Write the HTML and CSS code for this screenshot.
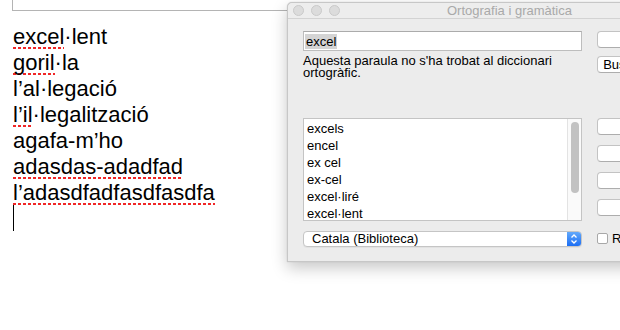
FILE: index.html
```
<!DOCTYPE html>
<html lang="ca">

<head>
    <meta charset="UTF-8" />
    <title>Ortografia i gramàtica</title>
    <link rel="stylesheet" href="styles.css">
</head>

<body>
    <div class="doc">
        <div class="doc-frame"></div>
        <div class="doc-text">
            <p><span class="typo">excel</span>·lent</p>
            <p><span class="typo">goril</span>·la</p>
            <p>l’al·legació</p>
            <p><span class="typo">l’il</span>·legalització</p>
            <p>agafa-m’ho</p>
            <p><span class="typo">adasdas-adadfad</span></p>
            <p><span class="typo">l’adasdfadfasdfasdfa</span></p>
            <span class="caret"></span>
        </div>
    </div>

    <div class="panel">
        <div class="titlebar">
            <div class="lights"><span></span><span></span><span></span></div>
            <div class="title">Ortografia i gramàtica</div>
        </div>
        <div class="panel-body">
            <div class="main-col">
                <div class="word-field"><span class="selected">excel</span></div>
                <p class="message">Aquesta paraula no s'ha trobat al diccionari ortogràfic.</p>
                <div class="guesses">
                    <ul>
                        <li>excels</li>
                        <li>encel</li>
                        <li>ex cel</li>
                        <li>ex-cel</li>
                        <li>excel·liré</li>
                        <li>excel·lent</li>
                    </ul>
                    <div class="scrollbar"><div class="thumb"></div></div>
                </div>
                <div class="popup">
                    <span class="popup-label">Catala (Biblioteca)</span>
                    <span class="stepper">
                        <svg width="8" height="12" viewBox="0 0 8 12">
                            <path d="M1.5 4.5 L4 2 L6.5 4.5 M1.5 7.5 L4 10 L6.5 7.5" fill="none" stroke="#fff" stroke-width="1.3" />
                        </svg>
                    </span>
                </div>
            </div>
            <div class="side-col">
                <button>Canvia</button>
                <button class="find">Busca la següent</button>
                <div class="button-group">
                    <button>Ignora</button>
                    <button>Aprèn</button>
                    <button>Defineix</button>
                    <button>Endevina</button>
                </div>
                <label class="check"><span class="box"></span>Revisa la gramàtica</label>
            </div>
        </div>
    </div>
</body>

</html>
```

FILE: styles.css
```
:root {
    --panel-bg: #ececec;
    --panel-border: #c7c7c7;
    --control-border: #c3c3c3;
    --typo-red: #f02626;
}

body {
    font-family: 'Liberation Sans', Arial, sans-serif;
    background: #fff;
    color: #000;
    margin: 0;
    height: 330px;
    overflow: hidden;
}

/* document behind the panel */
.doc-frame {
    margin-left: 12px;
    height: 10px;
    border-left: 1px solid #b4b4b4;
    border-bottom: 1px solid #b4b4b4;
}

.doc-text {
    padding: 13px 0 0 13px;
    font-size: 22px;
    line-height: 26px;
}

.doc-text p {
    margin: 0;
}

.typo {
    background-image: repeating-linear-gradient(90deg, var(--typo-red) 0 3px, transparent 3px 5px);
    background-size: 100% 2px;
    background-repeat: no-repeat;
    background-position: 0 100%;
}

.caret {
    display: block;
    width: 1px;
    height: 26px;
    margin-top: -1px;
    background: #000;
}

/* spelling window */
.panel {
    position: absolute;
    left: 287px;
    top: 2px;
    width: 445px;
    height: 260px;
    box-sizing: border-box;
    background: var(--panel-bg);
    border: 1px solid var(--panel-border);
    border-radius: 5px 5px 0 0;
    box-shadow: 0 6px 16px rgba(0, 0, 0, 0.22), 0 0 1px rgba(0, 0, 0, 0.25);
}

.titlebar {
    height: 15px;
    display: grid;
    grid-template-columns: 1fr auto 1fr;
    align-items: center;
    border-bottom: 1px solid #d3d3d3;
    background: #ededed;
    border-radius: 5px 5px 0 0;
}

.lights {
    display: flex;
    gap: 7px;
    padding-left: 5px;
}

.lights span {
    width: 11px;
    height: 11px;
    box-sizing: border-box;
    border-radius: 50%;
    background: #dcdcdc;
    border: 1px solid #cacaca;
}

.title {
    font-size: 13px;
    line-height: 15px;
    color: #a9a9a9;
}

.panel-body {
    display: flex;
    gap: 15px;
    padding: 12px 0 0 15px;
}

.main-col {
    width: 279px;
    display: flex;
    flex-direction: column;
}

.word-field {
    height: 20px;
    box-sizing: border-box;
    background: #fff;
    border: 1px solid #bdbdbd;
    border-top-color: #ababab;
    padding: 2px 0 0 1px;
    font-size: 13px;
    line-height: 15px;
}

.selected {
    display: inline-block;
    background: #d4d4d4;
    padding: 0 1px;
}

.message {
    margin: 4px 0 0;
    font-size: 13px;
    line-height: 12px;
}

.guesses {
    margin-top: 39px;
    height: 103px;
    box-sizing: border-box;
    display: flex;
    background: #fff;
    border: 1px solid #c4c4c4;
    overflow: hidden;
}

.guesses ul {
    flex: 1;
    margin: 0;
    padding: 1px 0 0 3px;
    list-style: none;
    font-size: 13px;
    line-height: 17px;
}

.scrollbar {
    width: 14px;
    box-sizing: border-box;
    border-left: 1px solid #e3e3e3;
    background: #fafafa;
}

.thumb {
    width: 8px;
    height: 71px;
    margin: 3px auto 0;
    border-radius: 4px;
    background: #c2c2c2;
}

.popup {
    margin-top: 10px;
    height: 16px;
    box-sizing: border-box;
    display: flex;
    align-items: center;
    background: #fff;
    border: 1px solid #c5c5c5;
    border-radius: 4px;
    overflow: hidden;
    font-size: 13px;
    line-height: 14px;
    box-shadow: 0 1px 0 rgba(0, 0, 0, 0.04);
}

.popup-label {
    padding-left: 8px;
}

.stepper {
    margin-left: auto;
    width: 14px;
    height: 100%;
    display: flex;
    align-items: center;
    justify-content: center;
    background: linear-gradient(#63a9fb, #1c6ef4);
}

.side-col {
    width: 112px;
    display: flex;
    flex-direction: column;
}

button {
    width: 112px;
    height: 17px;
    box-sizing: border-box;
    padding: 0;
    border: 1px solid var(--control-border);
    border-bottom-color: #adadad;
    border-radius: 4px;
    background: #fff;
    color: #000;
    font-family: 'Liberation Sans', Arial, sans-serif;
    font-size: 13px;
    line-height: 15px;
    text-align: center;
    white-space: nowrap;
}

.find {
    margin-top: 8px;
}

.button-group {
    margin-top: 45px;
    display: flex;
    flex-direction: column;
    gap: 10px;
}

.check {
    margin-top: 17px;
    display: flex;
    align-items: center;
    gap: 4px;
    font-size: 13px;
    line-height: 11px;
    white-space: nowrap;
}

.box {
    width: 11px;
    height: 11px;
    box-sizing: border-box;
    flex: none;
    background: #fff;
    border: 1px solid #a8a8a8;
    border-radius: 2px;
}
```
